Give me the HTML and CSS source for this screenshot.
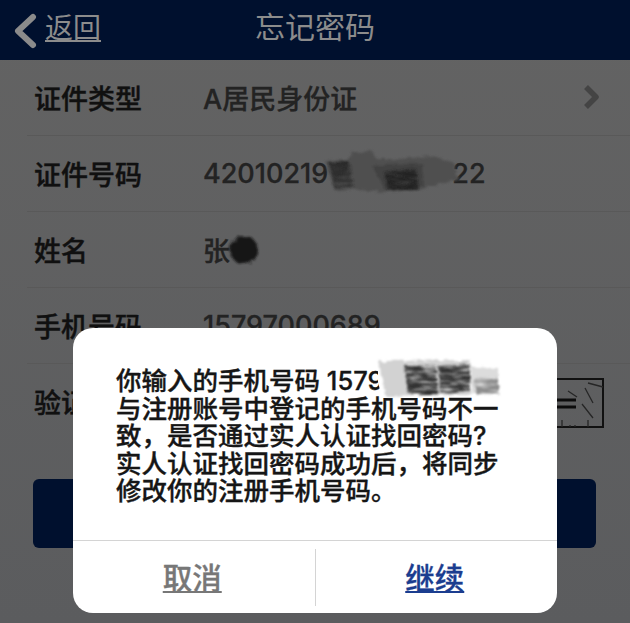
FILE: index.html
```html
<!DOCTYPE html>
<html lang="zh-CN">
<head>
<meta charset="utf-8">
<title>忘记密码</title>
<link rel="stylesheet" href="styles.css">
</head>
<body>
<div class="screen">
  <header class="nav">
    <a class="back">
      <svg class="back-icon" width="24" height="36" viewBox="0 0 24 36"><path d="M20 4 L5 18 L20 32" fill="none" stroke="#8b8b8b" stroke-width="6" stroke-linecap="round" stroke-linejoin="round"/></svg>
      <span class="back-text">返回</span>
    </a>
    <h1 class="title">忘记密码</h1>
    <span></span>
  </header>

  <section class="form">
    <div class="row"><span class="label">证件类型</span><span class="value">A居民身份证</span>
      <svg class="chevron" width="18" height="26" viewBox="0 0 18 26"><path d="M4 3 L14 13 L4 23" fill="none" stroke="#444" stroke-width="5.5" stroke-linejoin="round"/></svg>
    </div>
    <div class="row"><span class="label">证件号码</span><span class="value">42010219<span class="gap"></span>22</span></div>
    <div class="row"><span class="label">姓名</span><span class="value">张</span></div>
    <div class="row"><span class="label">手机号码</span><span class="value">15797000689</span></div>
    <div class="row"><span class="label">验证码</span>
      <svg class="captcha" width="60" height="52" viewBox="0 0 60 52">
        <rect x="1" y="3" width="58" height="48" fill="none" stroke="#111" stroke-width="2"/>
        <path d="M8 24H32M8 31H32" stroke="#0c0c0c" stroke-width="3"/>
        <path d="M24 15L33 21M41 12L49 27M44 7L59 11M38 28L49 42M18 44V51M44 44V51M26 49V51M31 49V51" stroke="#262626" stroke-width="1.3" fill="none"/>
      </svg>
    </div>
  </section>

  <div class="submit"></div>

  <svg class="smudges" width="630" height="623" viewBox="0 0 630 623">
    <defs>
      <filter id="rough" x="-20%" y="-30%" width="140%" height="160%">
        <feTurbulence type="fractalNoise" baseFrequency="0.12 0.3" numOctaves="3" seed="4"/>
        <feDisplacementMap in="SourceGraphic" scale="6"/>
        <feGaussianBlur stdDeviation="1"/>
      </filter>
      <filter id="scratch" x="-20%" y="-30%" width="140%" height="160%">
        <feTurbulence type="fractalNoise" baseFrequency="0.06 0.4" numOctaves="3" seed="9" result="noise"/>
        <feDisplacementMap in="SourceGraphic" in2="noise" scale="7" result="shape"/>
        <feColorMatrix in="noise" type="matrix" values="0 0 0 0 0  0 0 0 0 0  0 0 0 0 0  0 0 0 -2.4 2" result="grain"/>
        <feComposite in="shape" in2="grain" operator="in"/>
        <feGaussianBlur stdDeviation="1"/>
      </filter>
    </defs>
    <g filter="url(#rough)">
      <path d="M325 161L347 160L354 152L372 151L376 159L400 159L430 156L455 163L458 180L435 185L420 190L380 192L345 189L335 191Z" fill="#505050"/>
      <path d="M329 163L349 161L347 175L334 178Z" fill="#2a2a2a"/>
      <path d="M372 166L422 163L424 187L385 190Z" fill="#434343"/>
      <circle cx="244" cy="250" r="14" fill="#151515"/>
    </g>
    <g filter="url(#scratch)">
      <path d="M384 172L416 168L418 190L388 191Z" fill="#232323"/>
      <path d="M330 165L350 163L352 186L334 188Z" fill="#303030"/>
    </g>
  </svg>

  <div class="dialog">
    <p class="message">你输入的手机号码 15797000689<br>与注册账号中登记的手机号码不一<br>致，是否通过实人认证找回密码?<br>实人认证找回密码成功后，将同步<br>修改你的注册手机号码。</p>
    <svg class="mask" width="140" height="46" viewBox="0 0 140 46">
      <path d="M6 4L128 8V38L60 42L10 42L6 26Z" fill="#fff"/>
      <g filter="url(#rough)">
        <path d="M6 5L98 4L96 30L100 38L14 40Z" fill="#d2d2d2"/>
        <path d="M98 11L126 12L126 37L100 38Z" fill="#dcdcdc"/>
      </g>
      <g filter="url(#scratch)">
        <path d="M32 9L64 10L66 38L36 38Z" fill="#333"/>
        <path d="M66 10L98 8L98 36L68 38Z" fill="#363636"/>
        <path d="M102 24L126 22L126 37L104 38Z" fill="#8a8a8a"/>
      </g>
    </svg>
    <div class="actions">
      <a class="action cancel">取消</a>
      <a class="action confirm">继续</a>
    </div>
  </div>
</div>
</body>
</html>
```

FILE: styles.css
```css
* { box-sizing: border-box; }
html, body { margin: 0; padding: 0; }
body { font-family: Inter, "Noto Sans CJK SC", sans-serif; }
.screen {
  position: relative;
  width: 630px;
  height: 623px;
  overflow: hidden;
  background: linear-gradient(#636363, #5b5c5e);
}
.nav {
  height: 60px;
  background: #00102e;
  display: grid;
  grid-template-columns: 1fr auto 1fr;
  align-items: center;
  color: #8c8c8c;
}
.back { display: flex; align-items: center; padding-left: 13px; gap: 8px; }
.back-icon { margin-top: 1px; }
.back-text { font-size: 28px; padding-bottom: 4px; text-decoration: underline; text-underline-offset: 2px; text-decoration-thickness: 1.5px; line-height: 36px; }
.title { margin: 0; padding-bottom: 7px; font-size: 30px; font-weight: 400; line-height: 36px; }
.form { padding-left: 27px; }
.row {
  height: 76px;
  display: flex;
  align-items: center;
  padding-bottom: 1px;
  border-bottom: 1px solid #595959;
  color: #101010;
}
.row:last-child { border-bottom: 0; }
.label { width: 176px; padding-left: 7px; font-size: 27px; font-weight: 500; -webkit-text-stroke: 0.4px #101010; flex: none; }
.value { font-size: 27px; font-weight: 500; color: #232323; -webkit-text-stroke: 0.3px #232323; flex: 1; }
.gap { display: inline-block; width: 124px; }
.chevron { margin-right: 30px; }
.captcha { margin-top: 1px; margin-left: auto; margin-right: 26px; }
.submit {
  margin: 39px 34px 0 33px;
  height: 69px;
  background: #00102e;
  border-radius: 6px;
}
.smudges { position: absolute; inset: 0; }
.dialog {
  position: absolute;
  left: 73px;
  top: 328px;
  width: 484px;
  height: 285px;
  background: #fff;
  border-radius: 20px;
  display: flex;
  flex-direction: column;
}
.message {
  margin: 0;
  height: 212px;
  padding: 39px 0 0 43px;
  font-size: 25.5px;
  font-weight: 500;
  line-height: 27.6px;
  color: #161616;
  -webkit-text-stroke: 0.35px #161616;
  white-space: nowrap;
}
.mask { position: absolute; left: 299px; top: 28px; }
.actions {
  display: flex;
  flex: 1;
  border-top: 1px solid #d4d4d4;
  padding: 8px 0 7px;
}
.action {
  flex: 1;
  display: flex;
  align-items: center;
  justify-content: center;
  padding: 0 3px 4px 0;
  font-size: 29.5px;
  font-weight: 500;
  text-decoration: underline;
  text-underline-offset: 2px;
  -webkit-text-stroke: 0.3px currentColor;
}
.cancel { color: #777; border-right: 1px solid #d4d4d4; }
.confirm { color: #1b3d8f; }
```
